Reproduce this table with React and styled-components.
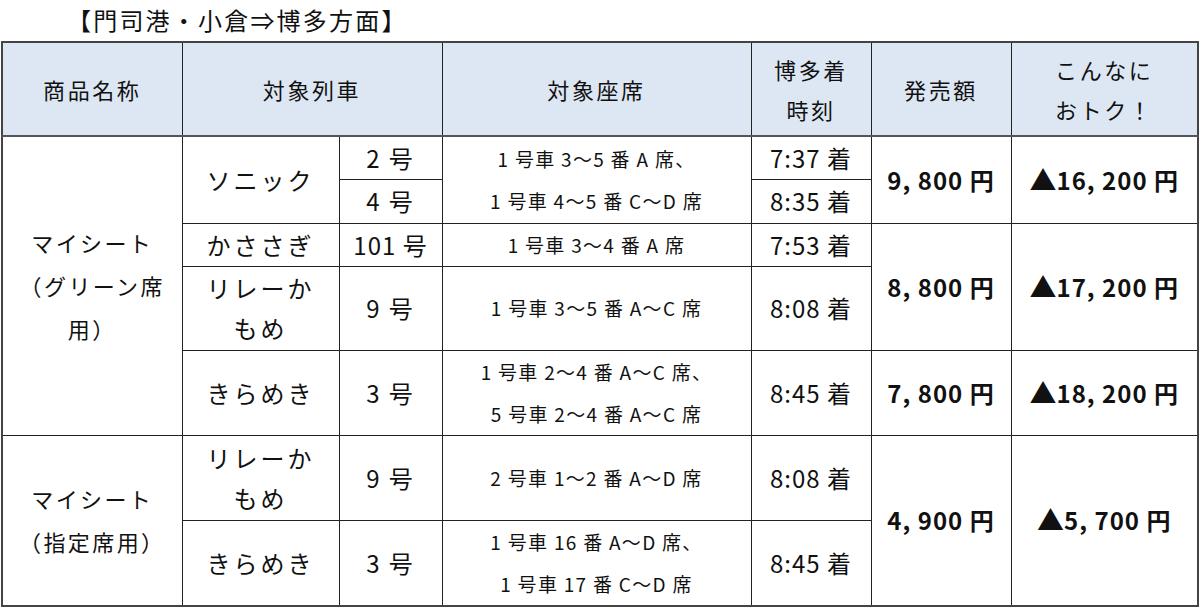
import styled, { createGlobalStyle } from "styled-components";

const GlobalStyle = createGlobalStyle`
  html, body {
    margin: 0;
    padding: 0;
    background: #ffffff;
  }
  body {
    font-family: "Noto Sans CJK JP", "Noto Sans", sans-serif;
    color: #111;
  }
`;

const Page = styled.div`
  width: 1200px;
  height: 612px;
  overflow: hidden;
`;

const Title = styled.div`
  height: 41px;
  padding-left: 67px;
  font-size: 24px;
  line-height: 40px;
  letter-spacing: 2.2px;
  white-space: nowrap;
`;

const Table = styled.table`
  margin-left: 1px;
  width: 1198px;
  border-collapse: collapse;
  table-layout: fixed;
  border: 2px solid #444;
`;

const HeadRow = styled.tr`
  height: 94px;
  background: #dde7f3;
`;

const Row = styled.tr`
  height: ${({ h }) => h}px;
`;

const Th = styled.th`
  border: 1px solid #222;
  border-bottom: 2px solid #555;
  font-weight: 400;
  font-size: 22px;
  line-height: 40px;
  letter-spacing: 2.6px;
  text-align: center;
  vertical-align: middle;
  padding: 0;
`;

const Td = styled.td`
  border: 1px solid #222;
  text-align: center;
  vertical-align: middle;
  padding: 0;
  font-size: ${({ size }) => size || 24}px;
  line-height: ${({ lh }) => lh || 40}px;
  letter-spacing: ${({ ls }) => (ls === undefined ? 3 : ls)}px;
  font-weight: ${({ bold }) => (bold ? 700 : 400)};
  white-space: nowrap;
`;

const Name = styled(Td)`
  font-size: 22px;
  line-height: 43px;
  letter-spacing: 2.4px;
`;

const Seat = styled(Td)`
  font-size: 19px;
  line-height: 42px;
  letter-spacing: 1.3px;
`;

const Tri = styled.span`
  font-size: 27px;
  line-height: 1px;
  letter-spacing: 0;
  vertical-align: -1px;
`;

export default function App() {
  return (
    <Page>
      <GlobalStyle />
      <Title>【門司港・小倉⇒博多方面】</Title>
      <Table>
        <colgroup>
          <col style={{ width: 180 }} />
          <col style={{ width: 157 }} />
          <col style={{ width: 103 }} />
          <col style={{ width: 309 }} />
          <col style={{ width: 120 }} />
          <col style={{ width: 140 }} />
          <col style={{ width: 187 }} />
        </colgroup>
        <thead>
          <HeadRow>
            <Th>商品名称</Th>
            <Th colSpan={2}>対象列車</Th>
            <Th>対象座席</Th>
            <Th>
              博多着
              <br />
              時刻
            </Th>
            <Th>発売額</Th>
            <Th>
              こんなに
              <br />
              おトク！
            </Th>
          </HeadRow>
        </thead>
        <tbody>
          <Row h={43}>
            <Name rowSpan={5}>
              マイシート
              <br />
              （グリーン席
              <br />
              用）
            </Name>
            <Td rowSpan={2}>ソニック</Td>
            <Td ls={2}>2 号</Td>
            <Seat rowSpan={2} lh={45}>
              1 号車 3〜5 番 A 席、
              <br />1 号車 4〜5 番 C〜D 席
            </Seat>
            <Td ls={1}>7:37 着</Td>
            <Td bold ls={1} rowSpan={2}>9, 800 円</Td>
            <Td bold ls={1} rowSpan={2}><Tri>▲</Tri>16, 200 円</Td>
          </Row>
          <Row h={44}>
            <Td ls={2}>4 号</Td>
            <Td ls={1}>8:35 着</Td>
          </Row>
          <Row h={43}>
            <Td>かささぎ</Td>
            <Td ls={1}>101 号</Td>
            <Seat>1 号車 3〜4 番 A 席</Seat>
            <Td ls={1}>7:53 着</Td>
            <Td bold ls={1} rowSpan={2}>8, 800 円</Td>
            <Td bold ls={1} rowSpan={2}><Tri>▲</Tri>17, 200 円</Td>
          </Row>
          <Row h={84}>
            <Td>
              リレーか
              <br />
              もめ
            </Td>
            <Td ls={2}>9 号</Td>
            <Seat>1 号車 3〜5 番 A〜C 席</Seat>
            <Td ls={1}>8:08 着</Td>
          </Row>
          <Row h={85}>
            <Td>きらめき</Td>
            <Td ls={2}>3 号</Td>
            <Seat>
              1 号車 2〜4 番 A〜C 席、
              <br />5 号車 2〜4 番 A〜C 席
            </Seat>
            <Td ls={1}>8:45 着</Td>
            <Td bold ls={1}>7, 800 円</Td>
            <Td bold ls={1}><Tri>▲</Tri>18, 200 円</Td>
          </Row>
          <Row h={85}>
            <Name rowSpan={2}>
              マイシート
              <br />
              （指定席用）
            </Name>
            <Td>
              リレーか
              <br />
              もめ
            </Td>
            <Td ls={2}>9 号</Td>
            <Seat>2 号車 1〜2 番 A〜D 席</Seat>
            <Td ls={1}>8:08 着</Td>
            <Td bold ls={1} rowSpan={2}>4, 900 円</Td>
            <Td bold ls={1} rowSpan={2}><Tri>▲</Tri>5, 700 円</Td>
          </Row>
          <Row h={85}>
            <Td>きらめき</Td>
            <Td ls={2}>3 号</Td>
            <Seat>
              1 号車 16 番 A〜D 席、
              <br />1 号車 17 番 C〜D 席
            </Seat>
            <Td ls={1}>8:45 着</Td>
          </Row>
        </tbody>
      </Table>
    </Page>
  );
}
